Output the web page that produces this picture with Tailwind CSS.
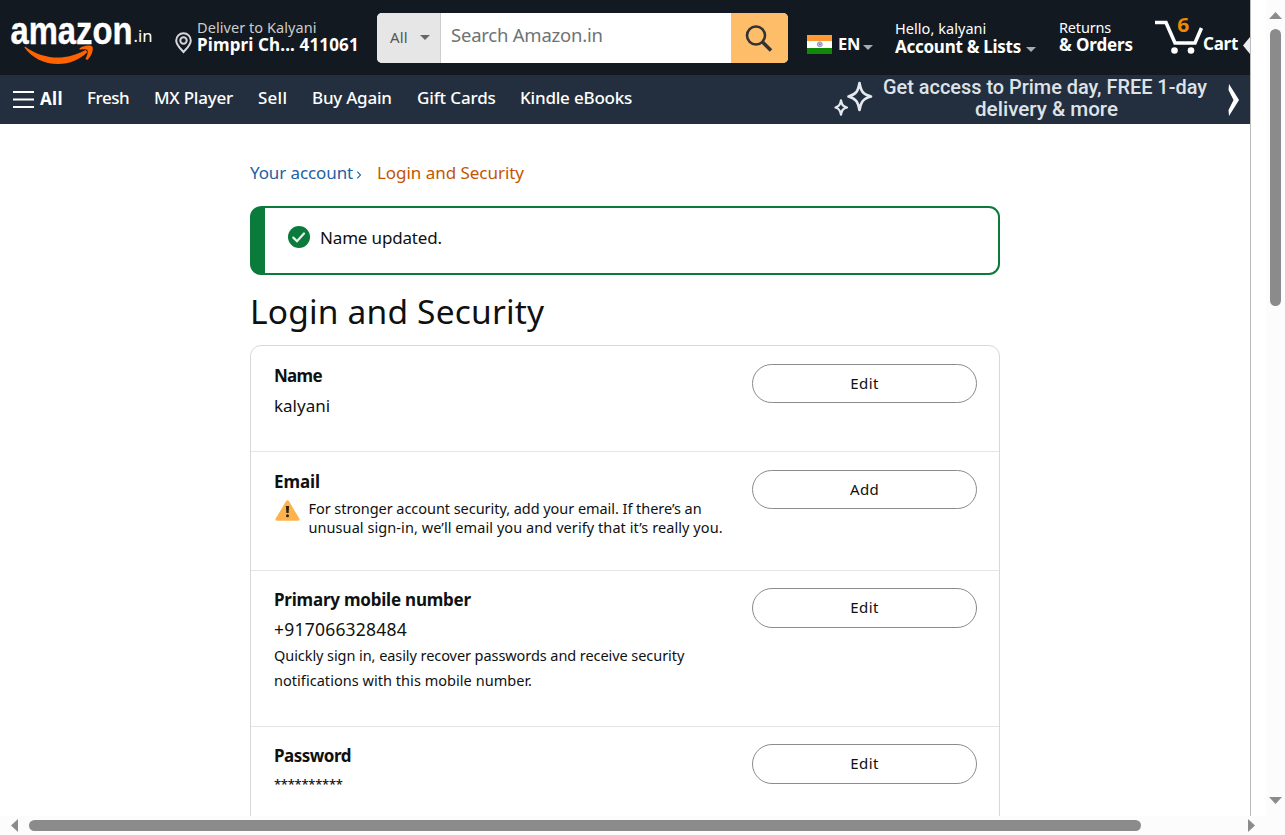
<!DOCTYPE html>
<html lang="en">
<head>
<meta charset="utf-8">
<title>Login and Security</title>
<script src="https://cdn.jsdelivr.net/npm/@tailwindcss/browser@4"></script>
</head>
<body class="h-[835px] w-[1285px] overflow-hidden bg-white font-['Noto_Sans',sans-serif] text-[#0f1111]">
<div class="flex h-[816px]">
  <div class="h-full w-[1251px] shrink-0 overflow-hidden border-r border-[#bbb] whitespace-nowrap">
    <header>
      <div class="flex h-[75px] items-start bg-[#131921] text-white">
        <svg class="ml-[10px] h-[75px] w-[165px] shrink-0" viewBox="10 0 165 75">
          <text x="10.5" y="43.8" textLength="122" lengthAdjust="spacingAndGlyphs" font-family="Liberation Sans" font-weight="700" font-size="39" fill="#fff" stroke="#fff" stroke-width=".4">amazon</text>
          <text x="133.500" y="42" textLength="19" lengthAdjust="spacingAndGlyphs" font-family="Noto Sans" font-size="16.500" fill="#fff">.in</text>
          <path d="M25 46.500C37 55.500 51 58.500 63 57.300C72 56.400 79 53.500 85.500 50L87.500 52C80 59.500 70 64 58 64C44 64 32 58 24.500 47.500Z" fill="#ff6200"/>
          <path d="M79.500 48.300C84 44.800 90.500 45 92.300 46.500C94 49 91.500 56.500 87.300 60L85.500 59C87 55.500 88.500 52 87.500 50.500C86.500 49 83 49.300 79.800 49.700Z" fill="#ff6200"/>
        </svg>
        <svg class="mt-[32px] h-[22px] w-[17px] shrink-0" viewBox="0 0 17 22" fill="none" stroke="#d5d7da" stroke-width="2">
          <path d="M8.500 20C5 16 1.200 13 1.200 8.500a7.300 7.300 0 0 1 14.600 0C15.800 13 12 16 8.500 20Z"/><circle cx="8.500" cy="8.500" r="3.200"/>
        </svg>
        <div class="ml-[6px] w-[179px] shrink-0 pt-[18px]">
          <div class="-ml-px text-[14.5px] leading-[19px] tracking-[0.06px] text-[#ccc]">Deliver to Kalyani</div>
          <div class="-mt-px -ml-px text-[17px] leading-[17px] font-bold tracking-[0.14px]">Pimpri Ch... 411061</div>
        </div>
        <div class="mt-[13px] flex h-[50px] w-[411px] shrink-0 overflow-hidden rounded-[5px] bg-white">
          <div class="flex w-[64px] items-start border-r border-[#cdcdcd] bg-[#e6e6e6] pl-[13px] text-[#555]">
            <span class="w-[30px] pt-[14px] text-[15px] leading-5 tracking-[0.2px]">All</span>
            <svg class="mt-[22px] h-[5px] w-[10px]" viewBox="0 0 10 5"><path d="M0 0h10L5 5Z" fill="#666"/></svg>
          </div>
          <div class="w-[290px] pt-[12px] pl-[10px] text-[18.5px] leading-5 tracking-[-0.23px] text-[#6f7373]">Search Amazon.in</div>
          <div class="w-[57px] bg-[#febd69]">
            <svg class="mt-[11px] ml-[14px] h-[29px] w-[29px]" viewBox="0 0 29 29" fill="none" stroke="#333" stroke-width="2.600"><circle cx="11" cy="11.500" r="9"/><path d="M17.500 18l8.500 8.500" stroke-width="3.600"/></svg>
          </div>
        </div>
        <div class="ml-[19px] flex w-[88px] shrink-0 items-start">
          <svg class="mt-[35px] h-[19px] w-[25px]" viewBox="0 0 25 19"><path d="M0 0h25v6H0Z" fill="#ff9933"/><path d="M0 6h25v7H0Z" fill="#fff"/><path d="M0 13h25v6H0Z" fill="#128807"/><circle cx="12.800" cy="9.300" r="2.500" fill="#bcbcd8" stroke="#8c8cb8" stroke-width=".8"/><circle cx="12.800" cy="9.300" r=".8" fill="#6666a0"/></svg>
          <span class="ml-[6px] w-[25px] pt-[34px] text-[16.5px] leading-5 font-bold tracking-[-0.3px]">EN</span>
          <svg class="mt-[45px] h-[5px] w-[10px]" viewBox="0 0 10 5"><path d="M0 0h10L5 5Z" fill="#a7acb2"/></svg>
        </div>
        <div class="w-[164px] shrink-0 pt-[19px]">
          <div class="text-[14.5px] leading-[19px] tracking-[0.05px]">Hello, kalyani</div>
          <div class="-mt-px flex text-[17px] leading-[19px] font-bold tracking-[-0.27px]"><span class="w-[131px]">Account &amp; Lists</span><svg class="mt-[10px] h-[5px] w-[10px]" viewBox="0 0 10 5"><path d="M0 0h10L5 5Z" fill="#a7acb2"/></svg></div>
        </div>
        <div class="w-[96px] shrink-0 pt-[18px]">
          <div class="text-[14.5px] leading-[19px] tracking-[-0.18px]">Returns</div>
          <div class="-mt-px text-[17px] leading-[17px] font-bold tracking-[-0.11px]">&amp; Orders</div>
        </div>
        <svg class="h-[75px] w-[48px] shrink-0" viewBox="1155 0 48 75">
          <path d="M1155 22.500h11L1175 43h20L1201.500 28" fill="none" stroke="#fff" stroke-width="3.600"/>
          <circle cx="1174.500" cy="50.500" r="3.300" fill="#fff"/><circle cx="1191" cy="50.500" r="3.300" fill="#fff"/>
          <text x="1177.300" y="32" font-family="Noto Sans" font-weight="700" font-size="19.500" textLength="12" lengthAdjust="spacingAndGlyphs" fill="#f08804">6</text>
        </svg>
        <span class="w-[40px] shrink-0 pt-[34px] text-[17px] leading-5 font-bold tracking-[-0.27px]">Cart</span>
        <svg class="mt-[37px] h-[17px] w-[7px] shrink-0" viewBox="0 0 7 17"><path d="M7 0v17L0 8.500Z" fill="#eee"/></svg>
      </div>
      <div class="flex h-[49px] items-start bg-[#232f3e] text-[17px] leading-5 font-medium text-white">
        <svg class="mt-[16px] ml-[13px] h-[17px] w-[21px] shrink-0" viewBox="0 0 21 17" fill="#fff"><path d="M0 0h21v2H0ZM0 7.500h21v2H0ZM0 15h21v2H0Z"/></svg>
        <span class="ml-[6px] w-[47px] shrink-0 pt-[14px] font-bold tracking-[0.3px]">All</span>
        <span class="w-[67px] shrink-0 pt-[13px] tracking-[-0.45px]">Fresh</span>
        <span class="w-[104px] shrink-0 pt-[13px] tracking-[-0.24px]">MX Player</span>
        <span class="w-[54px] shrink-0 pt-[13px] tracking-[0.25px]">Sell</span>
        <span class="w-[105px] shrink-0 pt-[13px] tracking-[-0.24px]">Buy Again</span>
        <span class="w-[103px] shrink-0 pt-[13px] tracking-[-0.14px]">Gift Cards</span>
        <span class="w-[313px] shrink-0 pt-[13px] tracking-[-0.2px]">Kindle eBooks</span>
        <svg class="mt-[4px] h-[38px] w-[40px] shrink-0" viewBox="833 79 40 38" fill="none" stroke="#e3e9ef" stroke-width="2.700" stroke-linejoin="round">
          <path d="M859.500 83C861 91.500 863 94.500 871 96.500C863 98.500 861 102 859.500 110C858 102 856 98.500 848.500 96.500C856 94.500 858 91.500 859.500 83Z"/>
          <path d="M841 100.500C841.800 105 843 106.500 847 107.500C843 108.500 841.800 110 841 114.500C840.200 110 839 108.500 835.500 107.500C839 106.500 840.200 105 841 100.500Z" stroke-width="2.300"/>
        </svg>
        <svg class="h-[49px] w-[377px] shrink-0" viewBox="873 75 377 49" fill="#dfe3e8">
          <g font-family="Roboto" font-size="20.500" font-weight="500"><text x="883" y="93.800" textLength="324" lengthAdjust="spacingAndGlyphs">Get access to Prime day, FREE 1-day</text><text x="975" y="116.300" textLength="143" lengthAdjust="spacingAndGlyphs">delivery &amp; more</text></g>
          <path d="M1229 84L1239 100L1229 116L1228.500 110L1233.500 100L1228.500 90Z" fill="#fff"/>
        </svg>
      </div>
    </header>
    <main class="ml-[250px] w-[750px]">
      <nav class="flex h-[82px] pt-[39px] text-[17px] leading-[20px]">
        <a class="w-[106px] tracking-[-0.1px] text-[#2162a1]">Your account</a><svg class="mt-[8px] h-[8px] w-[21px]" viewBox="0 0 21 8"><path d="M1.300.7L4.500 4L1.300 7.300" fill="none" stroke="#2162a1" stroke-width="1.100"/></svg><span class="tracking-[-0.04px] text-[#c45500]">Login and Security</span>
      </nav>
      <div class="flex h-[69px] items-start rounded-[11px] border-2 border-l-[15px] border-[#0b7b3c] pl-[23px]">
        <svg class="mt-[18px] h-[22px] w-[22px]" viewBox="0 0 22 22"><circle cx="11" cy="11" r="11" fill="#0b7b3c"/><path d="M5.300 11.600L9 15.200L16 7.500" fill="none" stroke="#e8f3ec" stroke-width="2.200" stroke-linecap="round"/></svg>
        <span class="ml-[10px] pt-[19px] text-[17px] leading-[21px] tracking-[-0.16px]">Name updated.</span>
      </div>
      <h1 class="h-[70px] pt-[15px] text-[33.5px] leading-[42px] tracking-[0.18px]">Login and Security</h1>
      <div class="h-[520px] rounded-[11px] border border-[#d5d9d9] text-[14.5px]">
        <section class="flex h-[106px] items-start border-b border-[#e3e6e6] pl-[23px]">
          <div class="w-[478px] pt-[19px] text-[17px] leading-[21px]">
            <h2 class="font-bold tracking-[-0.7px]">Name</h2>
            <p class="mt-[9px]">kalyani</p>
          </div>
          <button class="mt-[18px] h-[39px] w-[225px] rounded-full border border-[#888c8c] pb-px text-[15px] tracking-[0.4px]">Edit</button>
        </section>
        <section class="flex h-[119px] items-start border-b border-[#e3e6e6] pl-[23px]">
          <div class="w-[478px] pt-[19px]">
            <h2 class="text-[17px] leading-[21px] font-bold tracking-[-0.1px]">Email</h2>
            <div class="mt-[7px] flex">
              <svg class="mt-px ml-px h-[21px] w-[25px]" viewBox="0 0 25 21"><path d="M12.500.3Q13.400.3 14 1.300L24.300 18.500Q24.800 20.700 23 20.700H2Q.2 20.700.7 18.500L11 1.300Q11.600.3 12.500.3Z" fill="#ffb14a"/><path d="M10.900 6h3.200l-.5 7h-2.200Z" fill="#2a2112"/><circle cx="12.500" cy="15.800" r="1.500" fill="#2a2112"/></svg>
              <p class="ml-[8.5px] leading-[19px]"><span class="tracking-[-0.05px]">For stronger account security, add your email. If there’s an</span><br><span class="tracking-[0.07px]">unusual sign-in, we’ll email you and verify that it’s really you.</span></p>
            </div>
          </div>
          <button class="mt-[18px] h-[39px] w-[225px] rounded-full border border-[#888c8c] pb-px text-[15px] tracking-[0.3px]">Add</button>
        </section>
        <section class="flex h-[156px] items-start border-b border-[#e3e6e6] pl-[23px]">
          <div class="w-[478px] pt-[18px]">
            <h2 class="text-[17px] leading-[21px] font-bold tracking-[-0.22px]">Primary mobile number</h2>
            <p class="mt-[9px] text-[17.5px] leading-[21px] tracking-[0.22px]">+917066328484</p>
            <p class="mt-[3px] leading-[25px]"><span class="tracking-[-0.07px]">Quickly sign in, easily recover passwords and receive security</span><br><span class="tracking-[0.04px]">notifications with this mobile number.</span></p>
          </div>
          <button class="mt-[17px] h-[40px] w-[225px] rounded-full border border-[#888c8c] pb-[2px] text-[15px] tracking-[0.4px]">Edit</button>
        </section>
        <section class="flex items-start pl-[23px]">
          <div class="w-[478px] pt-[18px] text-[17px] leading-[21px]">
            <h2 class="font-bold tracking-[-0.5px]">Password</h2>
            <p class="mt-[8px] text-[13px] font-medium tracking-[-0.25px]">**********</p>
          </div>
          <button class="mt-[17px] h-[40px] w-[225px] rounded-full border border-[#888c8c] pb-[2px] text-[15px] tracking-[0.4px]">Edit</button>
        </section>
      </div>
    </main>
  </div>
  <div class="ml-[15px] flex w-[19px] flex-col items-center bg-[#fcfcfc]">
    <svg class="mt-[12px] h-[7px] w-[13px]" viewBox="0 0 13 7"><path d="M0 7h13L6.500 0Z" fill="#8b8b8b"/></svg>
    <div class="mt-[10px] h-[277px] w-[11px] rounded-full bg-[#8b8b8b]"></div>
    <svg class="mt-auto mb-[12px] h-[7px] w-[13px]" viewBox="0 0 13 7"><path d="M0 0h13L6.500 7Z" fill="#8b8b8b"/></svg>
  </div>
</div>
<div class="flex h-[19px] items-center bg-[#fcfcfc]">
  <svg class="ml-[11px] h-[13px] w-[7px]" viewBox="0 0 7 13"><path d="M7 0v13L0 6.500Z" fill="#8b8b8b"/></svg>
  <div class="ml-[11px] h-[11px] w-[1112px] rounded-full bg-[#8b8b8b]"></div>
  <svg class="ml-[107px] h-[13px] w-[7px]" viewBox="0 0 7 13"><path d="M0 0v13L7 6.500Z" fill="#8b8b8b"/></svg>
</div>
</body>
</html>
